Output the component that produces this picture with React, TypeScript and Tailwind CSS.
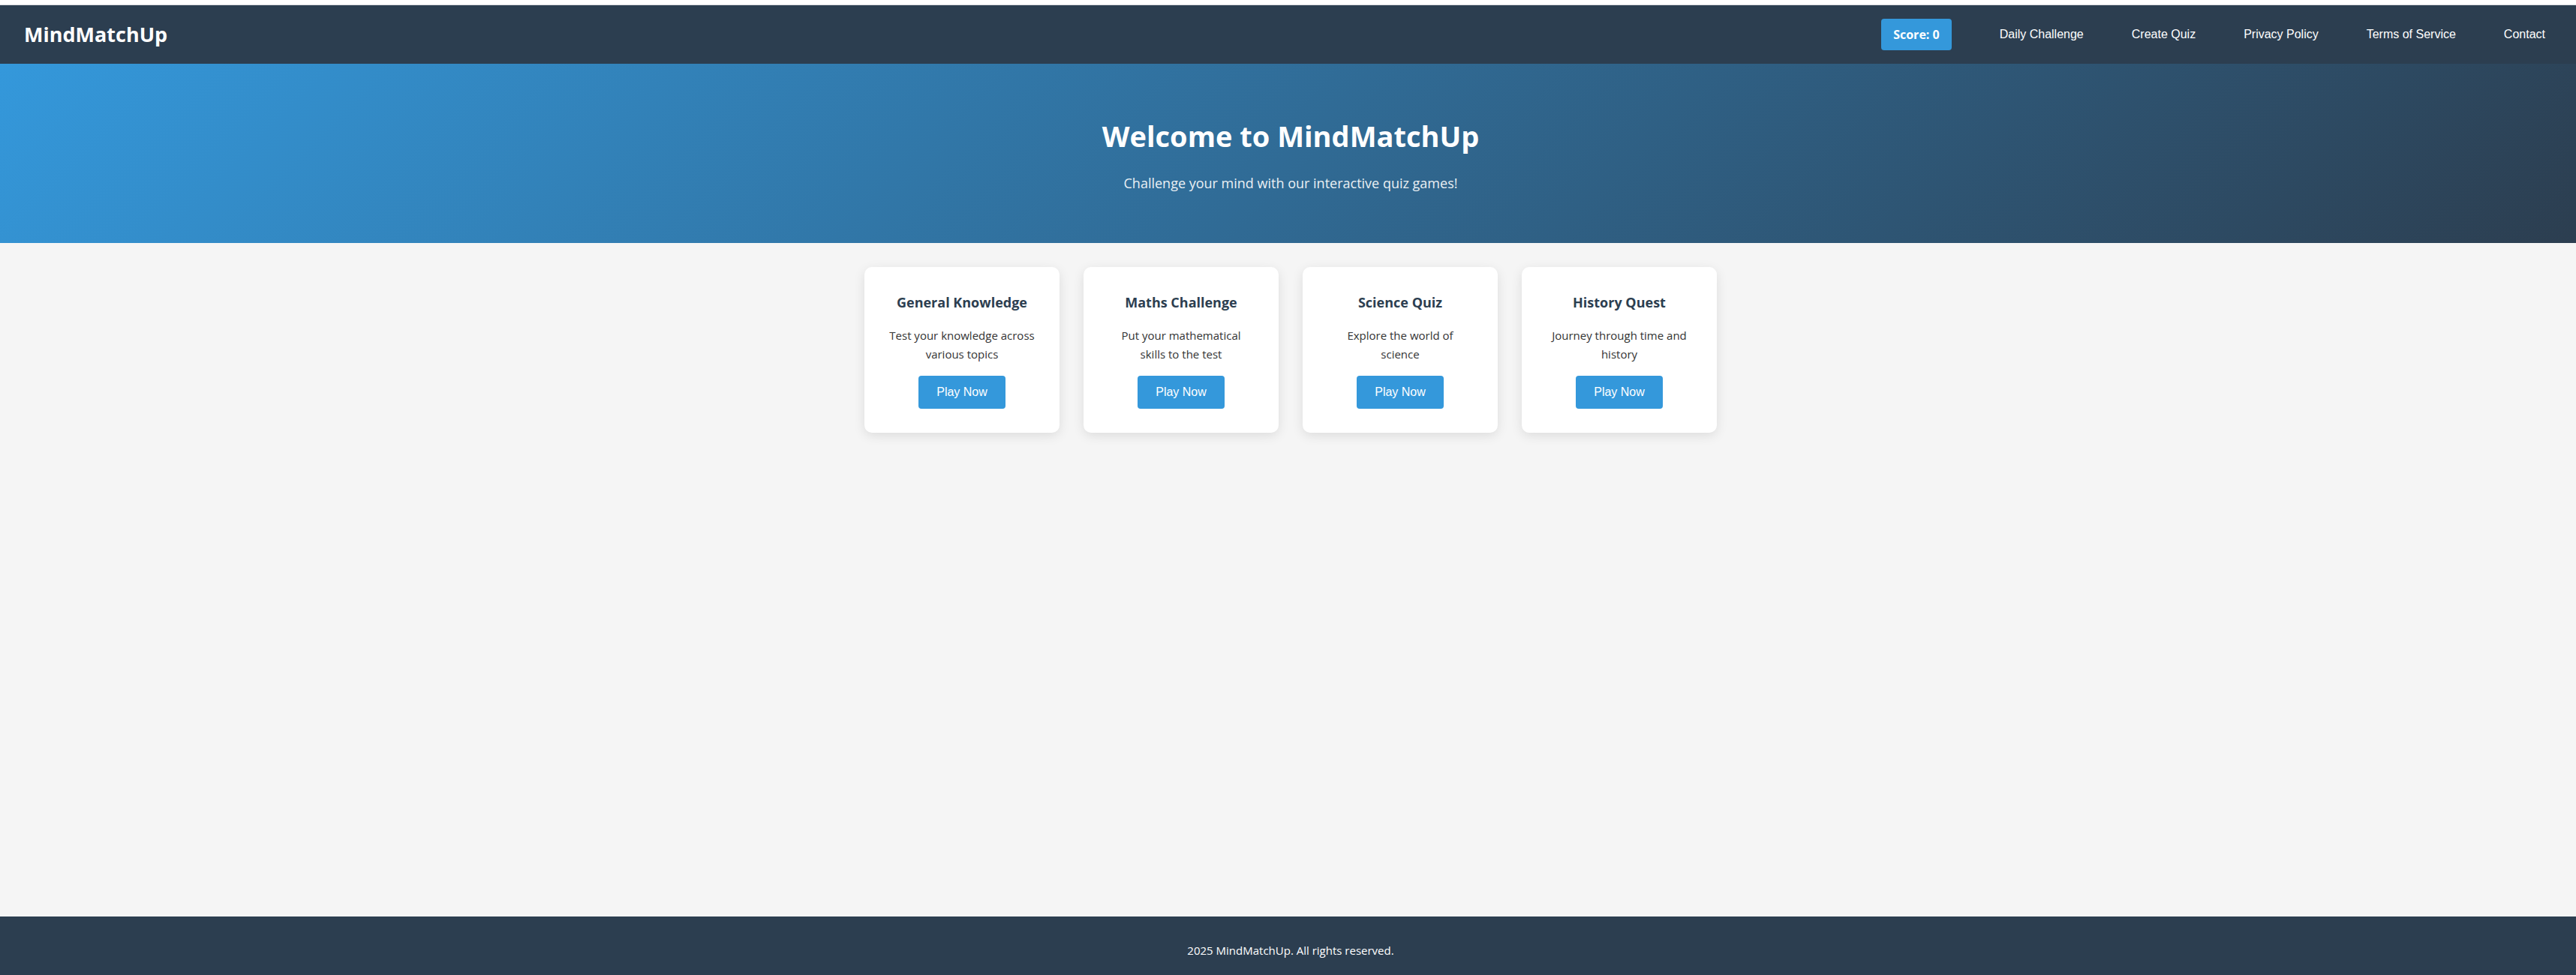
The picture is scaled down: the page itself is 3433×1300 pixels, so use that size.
const navLinks = ["Daily Challenge", "Create Quiz", "Privacy Policy", "Terms of Service", "Contact"];

const quizzes = [
  { title: "General Knowledge", text: "Test your knowledge across various topics" },
  { title: "Maths Challenge", text: "Put your mathematical skills to the test" },
  { title: "Science Quiz", text: "Explore the world of science" },
  { title: "History Quest", text: "Journey through time and history" },
];

function Header() {
  return (
    <header className="flex items-center justify-between bg-[#2c3e50] py-4 pl-8 pr-[25px] text-white">
      <div className="text-[27px] leading-[46px] font-bold">MindMatchUp</div>
      <nav className="flex items-center gap-8">
        <div className="mr-4 rounded bg-[#3498db] px-4 py-2 text-base leading-[26px] font-bold">Score: 0</div>
        {navLinks.map((label) => (
          <button
            key={label}
            type="button"
            className="cursor-pointer px-4 py-2 font-['Liberation_Sans',sans-serif] text-base leading-[26px]"
          >
            {label}
          </button>
        ))}
      </nav>
    </header>
  );
}

function Hero() {
  return (
    <section className="bg-[linear-gradient(135deg,#3498db,#2c3e50)] py-16 pl-[7px] text-center text-white">
      <h1 className="mb-4 text-[38px] leading-[64px] font-bold">Welcome to MindMatchUp</h1>
      <p className="text-[18px] leading-[31px] opacity-90">Challenge your mind with our interactive quiz games!</p>
    </section>
  );
}

function QuizCard({ title, text }: { title: string; text: string }) {
  return (
    <article className="rounded-[10px] bg-white p-8 text-center shadow-[0_4px_15px_rgba(0,0,0,0.1)]">
      <h3 className="mb-4 text-[18px] leading-[31px] font-bold text-[#2c3e50]">{title}</h3>
      <p className="mb-4 text-[15px] leading-[25px] text-[#333]">{text}</p>
      <button
        type="button"
        className="cursor-pointer rounded bg-[#3498db] px-6 py-[10px] font-['Liberation_Sans',sans-serif] text-base leading-6 text-white"
      >
        Play Now
      </button>
    </article>
  );
}

export default function App() {
  return (
    <div className="flex min-h-screen flex-col bg-[#f5f5f5] font-['Open_Sans','Noto_Sans',sans-serif]">
      <div className="h-[7px] border-b border-[#dadce0] bg-white" />
      <Header />
      <Hero />
      <main className="flex-1 py-8 pl-[7px]">
        <div className="mx-auto grid max-w-[1136px] grid-cols-1 gap-8 sm:grid-cols-2 lg:grid-cols-4">
          {quizzes.map((quiz) => (
            <QuizCard key={quiz.title} title={quiz.title} text={quiz.text} />
          ))}
        </div>
      </main>
      <footer className="bg-[#2c3e50] pt-8 pb-5 pl-[7px] text-center text-[15px] leading-[26px] text-white">
        <p>2025 MindMatchUp. All rights reserved.</p>
      </footer>
    </div>
  );
}
